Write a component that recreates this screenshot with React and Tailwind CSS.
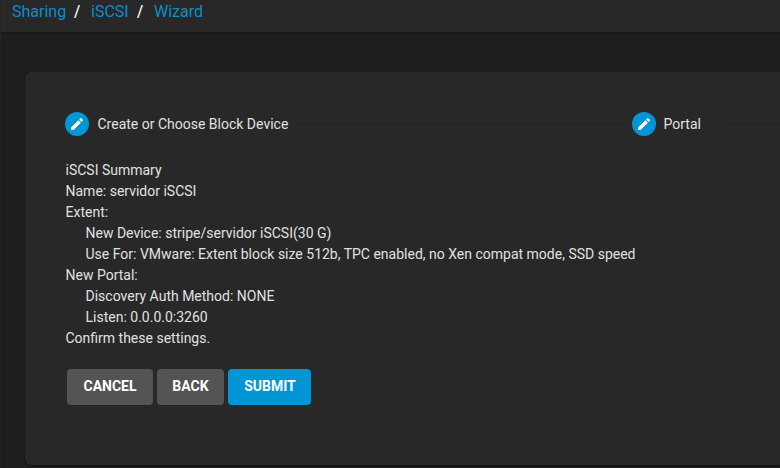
import React from "react";
import { MdEdit } from "react-icons/md";

const summary = [
  { text: "iSCSI Summary" },
  { text: "Name: servidor iSCSI" },
  { text: "Extent:" },
  { text: "New Device: stripe/servidor iSCSI(30 G)", nested: true },
  { text: "Use For: VMware: Extent block size 512b, TPC enabled, no Xen compat mode, SSD speed", nested: true },
  { text: "New Portal:" },
  { text: "Discovery Auth Method: NONE", nested: true },
  { text: "Listen: 0.0.0.0:3260", nested: true },
  { text: "Confirm these settings." },
];

function Step({ label, gap = "gap-2" }) {
  return (
    <div className={`flex shrink-0 items-center ${gap}`}>
      <span className="flex size-6 items-center justify-center rounded-full bg-[#0095d5] text-white">
        <MdEdit size={16} />
      </span>
      <span className="whitespace-nowrap">{label}</span>
    </div>
  );
}

function Breadcrumbs() {
  return (
    <nav className="flex h-8 bg-[#282828] pl-[11px] text-[16px] leading-6 text-[#0d8ec7] shadow-[0_1px_2px_rgba(0,0,0,0.25)]">
      <a className="w-[62px]">Sharing</a>
      <span className="w-[17px] font-medium text-[#f0f0f0]">/</span>
      <a className="w-[46px]">iSCSI</a>
      <span className="w-[17px] font-medium text-[#f0f0f0]">/</span>
      <a>Wizard</a>
    </nav>
  );
}

export default function App() {
  return (
    <div className="h-[468px] w-[780px] overflow-hidden border-l border-[#232323] bg-[#1e1e1e] font-[Roboto,sans-serif] text-[14px] leading-[21px] text-[#e0e0e0]">
      <Breadcrumbs />
      <main className="ml-6 mt-10 h-[393px] rounded-l-md bg-[#282828] pl-10 pt-10 shadow-[0_1px_2px_rgba(0,0,0,0.5)]">
        <div className="flex h-6 items-center">
          <Step label="Create or Choose Block Device" gap="gap-[8.5px]" />
          <div className="mx-2 h-px flex-1 bg-[#232323]" />
          <div className="flex w-[148px] items-center">
            <Step label="Portal" gap="gap-[7.5px]" />
            <div className="ml-5 h-px flex-1 bg-[#232323]" />
          </div>
        </div>
        <div className="mt-6 whitespace-nowrap pl-[0.5px]">
          {summary.map((line) => (
            <div key={line.text} className={line.nested ? "pl-5" : ""}>
              {line.text}
            </div>
          ))}
        </div>
        <div className="ml-0.5 mt-5 flex gap-1 font-bold text-white">
          <button className="h-9 w-[86px] rounded-[4px] bg-[#545454] pb-0.5">CANCEL</button>
          <button className="h-9 w-[67px] rounded-[4px] bg-[#545454] pb-0.5">BACK</button>
          <button className="h-9 w-[83px] rounded-[4px] bg-[#0095d5] pb-0.5 pl-px">SUBMIT</button>
        </div>
      </main>
    </div>
  );
}
